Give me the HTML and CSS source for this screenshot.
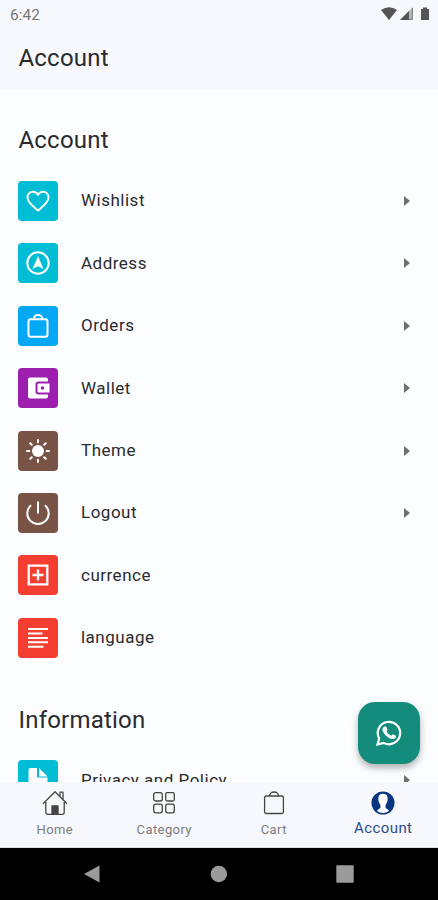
FILE: index.html
```html
<!DOCTYPE html>
<html lang="en">
<head>
<meta charset="utf-8">
<title>Account</title>
<link rel="stylesheet" href="styles.css">
</head>
<body>
<div class="screen">
  <header class="top">
    <div class="status">
      <span class="clock">6:42</span>
      <svg class="signals" width="50" height="16" viewBox="0 0 50 16">
        <path d="M1 4Q9 -1.500 17 4L9 14Z" fill="#555"/>
        <path d="M20 14L33 1V14Z" fill="#bbb"/>
        <path d="M20 14L29 5V14Z" fill="#555"/>
        <path d="M32.300 2V13.300H29" fill="none" stroke="#777" stroke-width="1"/>
        <path d="M41 3h2V1.500h4V3h2v11h-8Z" fill="#555"/>
      </svg>
    </div>
    <h1 class="title">Account</h1>
  </header>

  <main class="content">
    <h2 class="heading">Account</h2>
    <ul class="list">
      <li class="row">
        <span class="tile cyan"><svg class="icon" viewBox="0 0 24 24"><path d="M12 21.500C8.500 18.500 1.500 14 1.500 8.300 1.500 5.200 3.800 2.800 6.700 2.800 9 2.800 11 4 12 5.800 13 4 15 2.800 17.300 2.800 20.200 2.800 22.500 5.200 22.500 8.300 22.500 14 15.500 18.500 12 21.500Z" class="line"/></svg></span>
        <span class="label">Wishlist</span><i class="arrow"></i>
      </li>
      <li class="row">
        <span class="tile cyan"><svg class="icon" viewBox="0 0 24 24"><circle cx="12" cy="12" r="10.700" class="line"/><path d="M12 5L17.500 18 12 15.200 6.500 18Z" class="solid"/></svg></span>
        <span class="label">Address</span><i class="arrow"></i>
      </li>
      <li class="row">
        <span class="tile blue"><svg class="icon" viewBox="0 0 24 24"><rect x="2.500" y="5.200" width="19" height="17.500" rx="2" class="line"/><path d="M8 5V4a4 3 0 0 1 8 0v1" class="line"/></svg></span>
        <span class="label">Orders</span><i class="arrow"></i>
      </li>
      <li class="row">
        <span class="tile purple"><svg class="icon" viewBox="0 0 24 24"><path d="M4 1.500H20a2 2 0 0 1 2 2V5.500H12.500a3 3 0 0 0-3 3v7a3 3 0 0 0 3 3H22v2a2 2 0 0 1-2 2H4a2 2 0 0 1-2-2v-17a2 2 0 0 1 2-2Z" class="solid"/><path d="M12.500 7.500H23.500v9H12.500a1 1 0 0 1-1-1v-7a1 1 0 0 1 1-1Z" class="solid"/><circle cx="16.500" cy="12" r="1.800" fill="#9c1fb0"/></svg></span>
        <span class="label">Wallet</span><i class="arrow"></i>
      </li>
      <li class="row">
        <span class="tile brown"><svg class="icon" viewBox="0 0 24 24"><circle cx="12" cy="12" r="6" class="solid"/><path d="M12 1v2.300M12 20.700v2.300M1 12h2.300M20.700 12h2.300M4.200 4.200l1.600 1.600M18.200 18.200l1.600 1.600M4.200 19.800l1.600-1.600M18.200 5.800l1.600-1.600" class="line round"/></svg></span>
        <span class="label">Theme</span><i class="arrow"></i>
      </li>
      <li class="row">
        <span class="tile brown"><svg class="icon" viewBox="0 0 24 24"><path d="M5 4.200A10.700 10.700 0 1 0 19 4.200M12 .5V12.500" class="line"/></svg></span>
        <span class="label">Logout</span><i class="arrow"></i>
      </li>
      <li class="row">
        <span class="tile red"><svg class="icon" viewBox="0 0 24 24"><path d="M2.700 2.700H21.300V21.300H2.700ZM12 6.500v11M6.500 12h11" class="line bold"/></svg></span>
        <span class="label">currence</span>
      </li>
      <li class="row">
        <span class="tile red"><svg class="icon" viewBox="0 0 24 24"><path d="M2 3H22M2 7.500H16.500M2 12H22" class="line"/><path d="M2 16.300H22M2 20.700H17.500" class="line"/></svg></span>
        <span class="label">language</span>
      </li>
    </ul>
    <h2 class="heading info">Information</h2>
    <ul class="list last">
      <li class="row">
        <span class="tile cyan"><svg class="icon" viewBox="0 0 24 24"><path d="M4.500 0H11v9.500H21.500V23H2.500V2a2 2 0 0 1 2-2Z" class="solid"/><path d="M13 0L21.500 8.500H13Z" class="solid"/></svg></span>
        <span class="label">Privacy and Policy</span><i class="arrow"></i>
      </li>
    </ul>
    <button class="chat" aria-label="Chat">
      <svg width="28" height="28" viewBox="0 0 28 28">
        <path d="M2.500 25.500L4.200 19.500A11.200 11.200 0 1 1 8.700 23.900Z" fill="none" stroke="#fff" stroke-width="2.200"/>
        <path d="M9.200 7.500H10.700Q11.200 7.500 11.500 8.200L12.500 10.700Q12.500 11.300 11.400 12.500 13.200 15.700 16.300 16.800L17.800 15.200 21 16.800Q21.300 18.600 19.500 19.700 17.400 20.900 13.200 18.500 9.500 16 7.700 12.200 6.800 9.200 9.200 7.500Z" fill="#fff"/>
      </svg>
    </button>
  </main>

  <nav class="tabs">
    <a class="tab"><svg width="28" height="26" viewBox="0 0 28 26" class="glyph"><path d="M2 13.800L14 1.800 26 13.800M4.800 12V22.500a1.800 1.800 0 0 0 1.800 1.800H21.400a1.800 1.800 0 0 0 1.800-1.800V12M19 6V2.200h3V9.500"/><path d="M11 24V16h6v8Z" fill="#444"/></svg><span>Home</span></a>
    <a class="tab"><svg width="28" height="26" viewBox="0 0 28 26" class="glyph"><rect x="3.700" y="2.700" width="8.600" height="8.300" rx="2"/><rect x="15.700" y="2.700" width="8.600" height="8.300" rx="1.500"/><rect x="3.700" y="14.200" width="8.600" height="8.600" rx="2"/><rect x="15.700" y="14.200" width="8.600" height="8.600" rx="2"/></svg><span>Category</span></a>
    <a class="tab"><svg width="28" height="26" viewBox="0 0 28 26" class="glyph"><rect x="4.600" y="6" width="18.800" height="17.500" rx="1.500"/><path d="M9.500 6a4.500 4 0 0 1 9 0"/></svg><span>Cart</span></a>
    <a class="tab active"><svg width="28" height="26" viewBox="0 0 28 26"><circle cx="14" cy="13" r="11.500" fill="#07357e"/><path d="M14 3.800C17.300 3.800 18.700 5.800 18.700 8.700 18.700 11.500 17.600 13.300 16.600 14.800V18C17.200 19 19 19 20 20.700 17 23.700 11 23.700 8 20.700 9 19 10.800 19 11.400 18V14.800C10.400 13.300 9.300 11.500 9.300 8.700 9.300 5.800 10.700 3.800 14 3.800Z" fill="#fff"/></svg><span>Account</span></a>
  </nav>
  <footer class="system">
    <svg width="18" height="20" viewBox="0 0 18 20"><path d="M1 10L16.500 1.500V18.500Z"/></svg>
    <svg width="18" height="18" viewBox="0 0 18 18"><circle cx="9.800" cy="9" r="8.200"/></svg>
    <svg width="18" height="18" viewBox="0 0 18 18"><rect x=".3" y=".3" width="17.400" height="17.400" rx="1"/></svg>
  </footer>
</div>
</body>
</html>
```
FILE: styles.css
```css
* { box-sizing: border-box; }
body { margin: 0; font-family: Roboto, "Liberation Sans", sans-serif; color: #2a2b2e; }
.screen { width: 438px; height: 900px; display: flex; flex-direction: column; overflow: hidden; background: #fbfdff; }
.top { flex: none; height: 90px; background: #f6f8fb; }
.status { display: flex; justify-content: space-between; align-items: center; height: 28px; padding: 0 8px 0 10px; }
.clock { padding-top: 1px; font-size: 15.5px; color: #777; }
.signals { display: block; }
.title, .heading { margin: 0; font-size: 24px; font-weight: 400; line-height: 32px; letter-spacing: .2px; }
.title { padding: 14px 18.5px 0; }
.content { position: relative; flex: none; height: 692px; padding: 34px 0 0; overflow: hidden; }
.heading { padding-left: 18.5px; }
.list { list-style: none; margin: 13.8px 0 0; padding: 0; }
.row { display: flex; align-items: center; height: 62.4px; padding: 0 28px 0 18.4px; }
.tile { flex: none; display: flex; align-items: center; justify-content: center; width: 40px; height: 40px; border-radius: 4px; }
.icon { width: 24px; height: 24px; }
.cyan { background: #00bcd5; }
.blue { background: #05a8f4; }
.purple { background: #9c1fb0; }
.brown { background: #795346; }
.red { background: #f53e32; }
.line { fill: none; stroke: #fff; stroke-width: 2; stroke-linejoin: round; }
.bold { stroke-width: 2.3; stroke-linejoin: miter; }
.round { stroke-linecap: round; }
.solid { fill: #fff; }
.label { flex: 1; margin: -1px 0 0 22.6px; font-size: 17px; letter-spacing: .5px; }
.arrow { border-left: 6px solid #707070; border-top: 5px solid transparent; border-bottom: 5px solid transparent; }
.info { margin-top: 35px; }
.last { margin-top: 13px; }
.chat { position: absolute; top: 612px; left: 358px; width: 62px; height: 62px; padding: 0; border: 0; border-radius: 17px; background: #148c7b; box-shadow: 0 4px 7px rgba(0,0,0,.3); display: flex; align-items: center; justify-content: center; }
.tabs { flex: none; display: grid; grid-template-columns: repeat(4, 1fr); height: 66px; background: #f6f8fb; border-bottom: 1px solid #ddd; }
.tab { display: flex; flex-direction: column; align-items: center; padding-top: 8px; font-size: 13px; letter-spacing: .4px; line-height: 16px; color: #7c7c7c; }
.tab span { margin-top: 6px; }
.active { font-size: 15px; color: #2c4d8c; }
.active span { margin-top: 4px; }
.glyph { fill: none; stroke: #444; stroke-width: 1.3; stroke-linejoin: round; }
.system { flex: 1; display: flex; align-items: center; justify-content: space-between; padding: 0 84px 0 82.5px; background: #000; fill: #9b9b9b; }
```
